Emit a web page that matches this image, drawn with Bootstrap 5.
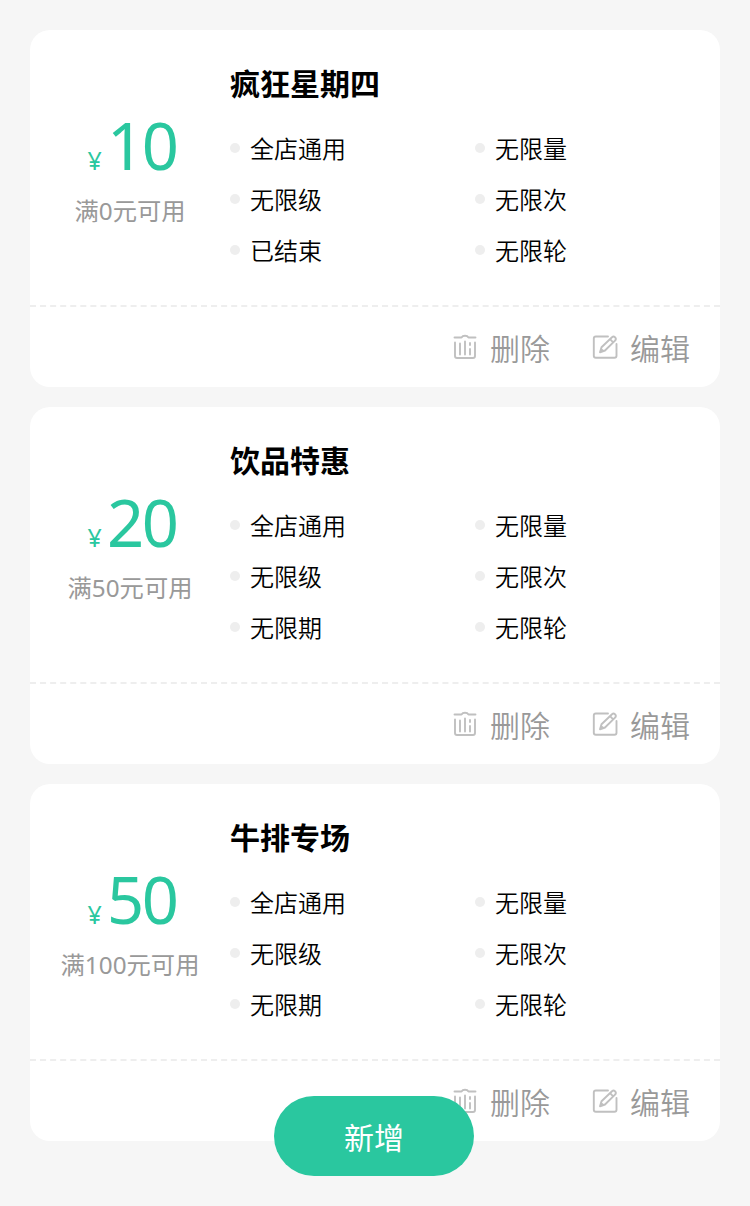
<!DOCTYPE html>
<html lang="zh-CN">
<head>
<meta charset="utf-8">
<meta name="viewport" content="width=device-width, initial-scale=1">
<title>优惠券</title>
<link href="https://cdn.jsdelivr.net/npm/bootstrap@5.3.0/dist/css/bootstrap.min.css" rel="stylesheet">
<style>
body{background:#f6f6f6;font-family:"Noto Sans","Noto Sans CJK SC",sans-serif;color:#000;height:1206px;overflow:hidden}
.coupons{padding:30px;gap:20px}
.coupon{border-radius:20px;height:357px;background:#fff}
.coupon-main{height:277px;border-bottom:2px dashed #eee}
.price{width:200px;padding-top:76px;color:#2ac79f;line-height:1}
.figure-row{padding-left:4px}
.yen{font-size:25px;margin-right:5px}
.amount{font-size:65px;line-height:78px;letter-spacing:-2.4px}
.cond{font-size:24.3px;line-height:36px;color:#999;margin-top:9px;font-weight:400}
.info{width:490px;padding-top:32px}
.title{font-size:30px;line-height:44px;font-weight:700;margin:0 0 16px}
.rule{width:245px;height:51px;font-family:"Noto Sans CJK SC",sans-serif;font-size:24px;gap:10px;font-weight:350}
.rule::before{content:"";width:10px;height:10px;border-radius:50%;background:#eee}
.ops{height:80px;gap:40px;padding-right:30px;font-family:"Noto Sans CJK SC",sans-serif;font-size:30px;color:#999;font-weight:350}
.op{gap:10px}
.op svg{width:30px;height:30px;fill:none;stroke:#c0c0c0;stroke-width:1.9;stroke-linecap:round;stroke-linejoin:round}
.add{width:200px;height:80px;border-radius:40px;background:#2ac79f;color:#fff;font-size:30px;left:274px;top:1096px;padding:2px 0 0}
</style>
</head>
<body>
<main class="d-flex flex-column coupons" id="list"></main>
<button class="btn position-fixed border-0 add">新增</button>
<script src="https://cdn.jsdelivr.net/npm/bootstrap@5.3.0/dist/js/bootstrap.bundle.min.js"></script>
<script>
const data=[["疯狂星期四",10,0,"已结束"],["饮品特惠",20,50,"无限期"],["牛排专场",50,100,"无限期"]];
document.getElementById("list").innerHTML=data.map(([t,a,c,s])=>`
<article class="coupon">
 <div class="coupon-main d-flex">
  <div class="price flex-shrink-0 text-center"><div class="figure-row"><span class="yen">¥</span><span class="amount">${a}</span></div><div class="cond">满${c}元可用</div></div>
  <div class="info flex-shrink-0"><h2 class="title">${t}</h2><div class="d-flex flex-wrap">${["全店通用","无限量","无限级","无限次",s,"无限轮"].map(r=>`<div class="rule d-flex align-items-center">${r}</div>`).join("")}</div></div>
 </div>
 <div class="ops d-flex justify-content-end align-items-center">
  <span class="op d-flex align-items-center"><svg viewBox="0 0 30 30"><path d="M4.500 5.500h7q1-1.800 3.500-1.800t3.500 1.800h7M5 10.500v13.500q0 2 2 2h16q2 0 2-2V10.500M10 11.500v11M15 9.500v13M20 11v2M20 17v5.500"/></svg>删除</span>
  <span class="op d-flex align-items-center"><svg viewBox="0 0 30 30"><path d="M18 4.500H5.800q-2 0-2 2v17.200q0 2 2 2h18.700q2 0 2-2V12M10 20.300l1.500-5L22 5.200q1.500-1.200 3 0t.3 3.200L15 18.500zM20 7.200l3.200 3.200"/><path d="M10 20.300l1.500-4 3 2.500z" fill="#c0c0c0" stroke="none"/></svg>编辑</span>
 </div>
</article>`).join("");
</script>
</body>
</html>
